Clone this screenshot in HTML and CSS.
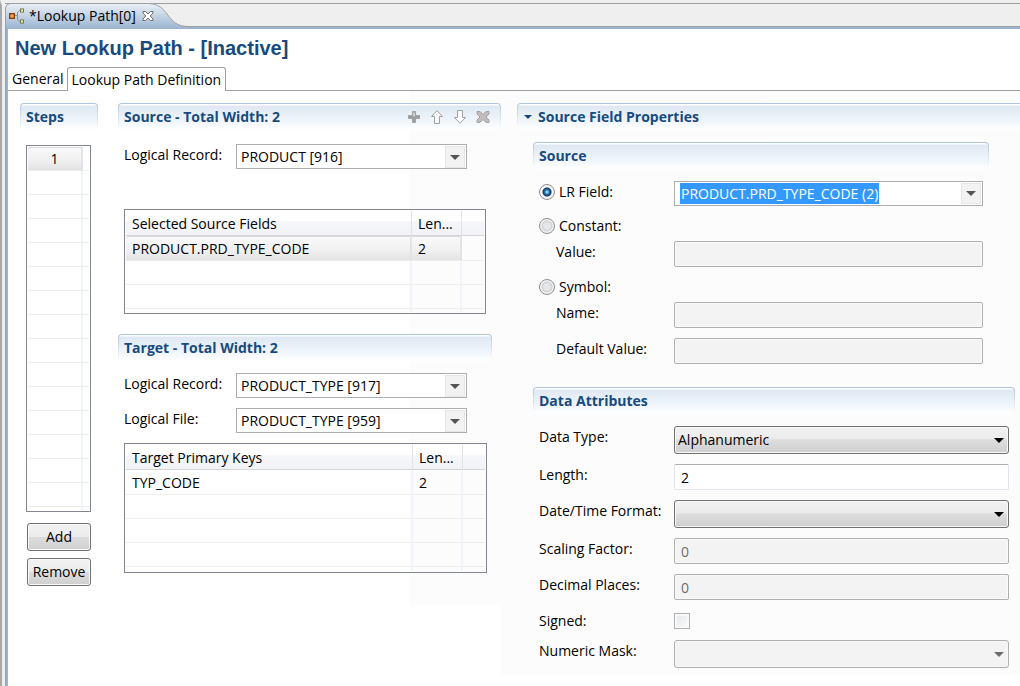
FILE: index.html
```html
<!DOCTYPE html>
<html lang="en">
<head>
<meta charset="utf-8">
<title>Lookup Path</title>
<link rel="stylesheet" href="styles.css">
</head>
<body>
<div class="workbench">
  <div class="sash"></div>
  <div class="editor">
    <header class="tabstrip">
      <div class="editor-tab">
        <svg class="tab-shape" viewBox="0 0 182 26" width="182" height="26" aria-hidden="true">
          <defs><linearGradient id="tabfill" x1="0" y1="0" x2="0" y2="1"><stop offset="0" stop-color="#eaf0f7"/><stop offset="1" stop-color="#99b4d1"/></linearGradient></defs>
          <path d="M0 26V5Q1 1 5 .5H144C158 1 161 11 167 17C172 22 176 23 182 23.500V26Z" fill="url(#tabfill)"/>
          <path d="M.5 26V5Q1 1 5 .5H144C158 1 161 11 167 17C172 22 176 23 182 23.500" fill="none" stroke="#a0a0a0"/>
        </svg>
        <svg class="tab-icon" viewBox="0 0 16 16" width="16" height="16" aria-hidden="true">
          <path d="M6 7.500H8.500M12 2.500H10.500L8.500 4.500V11.500L10.500 13.500H12" fill="none" stroke="#8a8f98"/>
          <rect x=".7" y="5.700" width="4.600" height="4.600" fill="#ffa75a" stroke="#8c3f05" stroke-width="1.400"/>
          <rect x="11.500" y="1" width="3" height="3" fill="#fff9a8" stroke="#77743a"/>
          <rect x="11.500" y="12" width="3" height="3" fill="#fff9a8" stroke="#77743a"/>
        </svg>
        <span class="tab-title">*Lookup Path[0]</span>
        <button class="tab-close" type="button" aria-label="Close">
          <svg viewBox="0 0 12 12" width="12" height="12"><path d="M1 1.500H3.500L6 4 8.500 1.500H11V3L8.200 6 11 9V10.500H8.500L6 8 3.500 10.500H1V9L3.800 6 1 3Z" fill="#fff" stroke="#6b6b6b"/></svg>
        </button>
      </div>
    </header>
    <main class="form">
      <h1>New Lookup Path - [Inactive]</h1>
      <nav class="pages" role="tablist">
        <button type="button" class="page" role="tab">General</button>
        <button type="button" class="page current" role="tab" aria-selected="true">Lookup Path Definition</button>
      </nav>
      <div class="columns">
        <section class="steps">
          <h2 class="bar">Steps</h2>
          <div class="list">
            <table>
              <colgroup><col><col class="edge"></colgroup>
              <tbody>
                <tr class="picked"><td>1</td><td></td></tr>
                <tr><td></td><td></td></tr><tr><td></td><td></td></tr><tr><td></td><td></td></tr>
                <tr><td></td><td></td></tr><tr><td></td><td></td></tr><tr><td></td><td></td></tr>
                <tr><td></td><td></td></tr><tr><td></td><td></td></tr><tr><td></td><td></td></tr>
                <tr><td></td><td></td></tr><tr><td></td><td></td></tr><tr><td></td><td></td></tr>
                <tr><td></td><td></td></tr><tr><td></td><td></td></tr>
                <tr class="rest"><td></td><td></td></tr>
              </tbody>
            </table>
          </div>
          <div class="actions">
            <button type="button" class="push">Add</button>
            <button type="button" class="push">Remove</button>
          </div>
        </section>

        <div class="middle">
          <section class="source">
            <div class="bar">
              <h2>Source - Total Width: 2</h2>
              <div class="tools">
                <button type="button" aria-label="Add"><svg viewBox="0 0 14 14" width="14" height="14"><path d="M5.500 1.500H8.500V5.500H12.500V8.500H8.500V12.500H5.500V8.500H1.500V5.500H5.500Z" fill="#9c9c9c" stroke="#a2a2a2"/><path d="M6.500 2.500H7.500V6.500H6.500Z" fill="#fff"/></svg></button>
                <button type="button" aria-label="Move up"><svg viewBox="0 0 14 14" width="14" height="14"><path d="M7 .7 12.500 6.500H9.500V13.500H4.500V6.500H1.500Z" fill="#fafafa" stroke="#a0a0a0"/></svg></button>
                <button type="button" aria-label="Move down"><svg viewBox="0 0 14 14" width="14" height="14"><path d="M7 13.300 12.500 7.500H9.500V.5H4.500V7.500H1.500Z" fill="#fafafa" stroke="#a0a0a0"/></svg></button>
                <button type="button" aria-label="Delete"><svg viewBox="0 0 14 14" width="14" height="14"><path d="M1 1.500H4L7 4.500 10 1.500H13V4L10 7 13 10V12.500H10L7 9.500 4 12.500H1V10L4 7 1 4Z" fill="#c2bcbc" stroke="#a6a0a0"/></svg></button>
              </div>
            </div>
            <div class="pair">
              <label for="src-record">Logical Record:</label>
              <span class="combo"><select id="src-record"><option>PRODUCT [916]</option></select><i class="drop"></i></span>
            </div>
            <div class="list grid">
              <table>
                <colgroup><col><col class="len"><col class="pad"></colgroup>
                <thead><tr><th>Selected Source Fields</th><th>Len...</th><th></th></tr></thead>
                <tbody>
                  <tr class="picked"><td>PRODUCT.PRD_TYPE_CODE</td><td>2</td><td></td></tr>
                  <tr><td></td><td></td><td></td></tr>
                  <tr><td></td><td></td><td></td></tr>
                  <tr class="rest"><td></td><td></td><td></td></tr>
                </tbody>
              </table>
            </div>
          </section>
          <section class="target">
            <h2 class="bar">Target - Total Width: 2</h2>
            <div class="pair">
              <label for="tgt-record">Logical Record:</label>
              <span class="combo"><select id="tgt-record"><option>PRODUCT_TYPE [917]</option></select><i class="drop"></i></span>
            </div>
            <div class="pair">
              <label for="tgt-file">Logical File:</label>
              <span class="combo"><select id="tgt-file"><option>PRODUCT_TYPE [959]</option></select><i class="drop"></i></span>
            </div>
            <div class="list grid">
              <table>
                <colgroup><col><col class="len"><col class="pad"></colgroup>
                <thead><tr><th>Target Primary Keys</th><th>Len...</th><th></th></tr></thead>
                <tbody>
                  <tr><td>TYP_CODE</td><td>2</td><td></td></tr>
                  <tr><td></td><td></td><td></td></tr>
                  <tr><td></td><td></td><td></td></tr>
                  <tr><td></td><td></td><td></td></tr>
                  <tr class="rest"><td></td><td></td><td></td></tr>
                </tbody>
              </table>
            </div>
          </section>
        </div>

        <section class="properties">
          <h2 class="bar twisty"><svg viewBox="0 0 8 4" width="8" height="4" aria-hidden="true"><path d="M0 0H8L4 4Z" fill="#16477f"/></svg>Source Field Properties</h2>
          <div class="group origin">
            <h3 class="bar">Source</h3>
            <div class="rows">
              <div class="row option">
                <label><input type="radio" name="origin" checked>LR Field:</label>
                <span class="combo"><span class="entry"><input class="selected" type="text" aria-label="LR Field" value="PRODUCT.PRD_TYPE_CODE (2)"></span><button class="drop" type="button" aria-label="Show fields"></button></span>
              </div>
              <div class="row option"><label><input type="radio" name="origin">Constant:</label></div>
              <div class="row sub"><label for="value">Value:</label><input id="value" class="text" type="text" disabled></div>
              <div class="row option"><label><input type="radio" name="origin">Symbol:</label></div>
              <div class="row sub"><label for="name">Name:</label><input id="name" class="text" type="text" disabled></div>
              <div class="row sub"><label for="default">Default Value:</label><input id="default" class="text" type="text" disabled></div>
            </div>
          </div>
          <div class="group attributes">
            <h3 class="bar">Data Attributes</h3>
            <div class="rows">
              <div class="row"><label for="type">Data Type:</label><span class="picker"><select id="type"><option>Alphanumeric</option></select><i class="arrow"></i></span></div>
              <div class="row"><label for="length">Length:</label><input id="length" class="text" type="text" value="2"></div>
              <div class="row"><label for="format">Date/Time Format:</label><span class="picker"><select id="format"><option></option></select><i class="arrow"></i></span></div>
              <div class="row"><label for="scaling">Scaling Factor:</label><input id="scaling" class="text" type="text" value="0" disabled></div>
              <div class="row"><label for="decimals">Decimal Places:</label><input id="decimals" class="text" type="text" value="0" disabled></div>
              <div class="row check"><label for="signed">Signed:</label><input id="signed" type="checkbox" disabled></div>
              <div class="row"><label for="mask">Numeric Mask:</label><span class="picker"><select id="mask" disabled><option></option></select><i class="arrow"></i></span></div>
            </div>
          </div>
        </section>
      </div>
    </main>
  </div>
</div>
</body>
</html>
```

FILE: styles.css
```css
* { box-sizing: border-box; }

body, input, select, button {
  font-family: "Open Sans", "Noto Sans", sans-serif;
  font-size: 14px;
  line-height: 22px;
  color: #000;
}

body { margin: 0; background: #efefef; }
button, input, select { margin: 0; }
h1, h2, h3 { margin: 0; }

.workbench { display: flex; min-height: 100vh; }
.sash { flex: none; width: 5px; border-left: 2px solid #a8a8a8; border-top: 6px solid #efefef; }
.editor { flex: 1; display: flex; flex-direction: column; min-width: 0; }

/* Editor tab */
.tabstrip {
  display: flex;
  height: 29px;
  padding-top: 3px;
  background: linear-gradient(#a0a0a0, #a0a0a0) 0 3px / 100% 1px no-repeat,
    linear-gradient(#a0a0a0, #a0a0a0) 0 26px / 100% 1px no-repeat,
    linear-gradient(#99b4d1, #99b4d1) 0 27px / 100% 2px no-repeat,
    #efefef;
}
.editor-tab { position: relative; display: flex; align-items: center; height: 25px; padding-left: 4px; white-space: nowrap; }
.tab-shape { position: absolute; left: 0; top: 0; }
.tab-icon, .tab-title, .tab-close { position: relative; }
.tab-title { margin: 0 6px 0 4px; }
.tab-close { display: flex; padding: 0; border: 0; background: none; }

/* Form */
.form { flex: 1; border-left: 1px solid #a0a0a0; box-shadow: inset 2px 0 #99b4d1; padding-left: 2px; background: #fff; }
h1 {
  padding: 7px 7px 0;
  font: bold 20px/24px "Liberation Sans", Arial, sans-serif;
  color: #174b80;
}
.pages { display: flex; height: 31px; padding-top: 7px; background: linear-gradient(#a0a0a0, #a0a0a0) 0 100% / 100% 1px no-repeat; }
.page { height: 24px; padding: 0 3px 0 4px; border: 0; background: none; line-height: 24px; white-space: nowrap; }
.page.current { padding: 0 4px; border: 1px solid #a0a0a0; border-bottom: 0; border-radius: 3px 3px 0 0; background: #fff; line-height: 23px; }

.columns { display: grid; grid-template-columns: 78px minmax(340px, 383fr) minmax(400px, 499fr); align-items: start; column-gap: 20px; padding-left: 12px; }
.columns > * { padding-top: 12px; min-width: 0; }

.bar {
  display: flex;
  align-items: center;
  height: 27px;
  padding: 0 5px;
  border: 1px solid transparent;
  border-bottom: 0;
  border-radius: 4px 4px 0 0;
  background: linear-gradient(#fff 1px, #dfe8f3 2px, #eef4fa 60%, #fff) padding-box,
    linear-gradient(#b0c4da, #fff) border-box;
  font-size: 14px;
  font-weight: 700;
  line-height: 22px;
  color: #174b80;
}
.bar h2 { font-size: 14px; line-height: 22px; }
.tools { display: flex; gap: 9px; margin-left: auto; padding-right: 5px; }
.tools button { display: flex; padding: 0; border: 0; background: none; }

/* Lists */
.list { padding: 1px; border: 1px solid #828790; background: #fff; }
.grid { background: none; }
table { width: 100%; table-layout: fixed; border-collapse: separate; border-spacing: 0; }
th, td { height: 24px; padding: 0 6px; border-bottom: 1px solid #ededed; font-weight: 400; line-height: 22px; text-align: left; white-space: nowrap; }
.grid th, .grid td { padding-top: 2px; }
th { height: 25px; border-bottom-color: #d5d5d5; border-right: 1px solid #dfe3e8; background: linear-gradient(#fff 40%, #f4f6f9 45%, #f1f3f6); }
td { border-right: 2px solid #f0f4fb; }
th:last-child, td:last-child { border-right: 0; }
.grid tbody tr:first-child td { height: 25px; }
.rest td, .grid .rest td { height: 3px; padding: 0; border-bottom: 0; }
.target .rest td { height: 4px; }
.picked td { background: linear-gradient(#fafafa, #f0f0f0 60%, #e3e3e3); box-shadow: inset 0 1px #dadada; border-right-color: #e3e3e3; }
.picked td:first-child { border-top-left-radius: 3px; }
.picked td:last-child { background: none; box-shadow: none; }
.len { width: 50px; }
.pad { width: 22px; }

.steps .list { margin: 15px 7px 0 6px; }
.steps td { padding: 0; text-align: center; }
.steps .edge { width: 6px; }
.actions { display: grid; gap: 7px; padding: 11px 7px 0 7px; }
.push {
  height: 28px;
  padding: 0;
  border: 1px solid #707070;
  border-radius: 3px;
  background: linear-gradient(#f2f2f2, #ebebeb 50%, #dddddd 50%, #cfcfcf);
  box-shadow: inset 0 0 0 1px #fafafa;
}

/* Source and target */
.middle { background: linear-gradient(90deg, #fff 76%, #fcfcfc 76%); padding-bottom: 32px; }
.pair { display: grid; grid-template-columns: 112px minmax(0, 231px); align-items: start; margin-left: 6px; }
.pair + .pair { margin-top: 10px; }
.source .pair { margin-top: 14px; }
.source .list { margin: 40px 15px 0 6px; }
.target { padding-top: 20px; }
.target .bar { margin-right: 9px; }
.target .bar + .pair { margin-top: 12px; }
.target .list { margin: 10px 14px 0 6px; }

.combo { display: grid; grid-template-columns: minmax(0, 1fr) 20px; height: 25px; padding: 1px; border: 1px solid #abadb3; background: #fff; }
.combo select { grid-area: 1 / 1 / 2 / 3; appearance: none; border: 0; padding: 0 24px 0 3px; background: none; width: 100%; }
.combo .drop {
  grid-area: 1 / 2;
  display: grid;
  place-items: center;
  padding: 0;
  border: 1px solid #e6e6e6;
  background: #f2f2f2;
  pointer-events: none;
}
.drop::before, .arrow::before { content: ""; border: solid transparent; border-width: 5px 5px 0; border-top-color: #555; }

/* Properties */
.properties { margin-left: -20px; padding-left: 16px; padding-bottom: 7px; background: #fcfcfc; }
.twisty { gap: 6px; padding-left: 6px; border-right: 0; border-top-right-radius: 0; }
.group { margin-left: 16px; }
.origin { margin-top: 12px; margin-right: 31px; }
.attributes { margin-top: 23px; margin-right: 5px; }
.rows { padding: 12px 6px 0; }
.row { display: grid; grid-template-columns: 135px minmax(0, 1fr); align-items: start; }
.row label { white-space: nowrap; }
.sub label { padding-left: 17px; }
.option label { display: flex; align-items: center; gap: 4px; }
.origin .row + .row { margin-top: 10px; }
.origin .option + .sub { margin-top: 4px; }
.origin .sub + .option, .origin .option + .option { margin-top: 9px; }

.attributes .rows { display: grid; gap: 10px; }

.text { width: 100%; height: 26px; padding: 0 6px; border: 1px solid #e2e3ea; border-top-color: #abadb3; border-radius: 2px; background: #fff; }
.text:disabled { border-color: #afafaf; background: #f3f3f3; color: #6d6d6d; box-shadow: inset 0 0 0 1px #fafafa; }

.picker { display: grid; grid-template-columns: minmax(0, 1fr) 20px; }
.picker select {
  grid-area: 1 / 1 / 2 / 3;
  appearance: none;
  height: 28px;
  padding: 0 20px 0 3px;
  border: 1px solid #707070;
  border-radius: 3px;
  background: linear-gradient(#f2f2f2, #ebebeb 45%, #dddddd 50%, #cfcfcf);
  box-shadow: inset 0 0 0 1px #f8f8f8;
}
.picker select:disabled { border-color: #afafaf; background: #f3f3f3; opacity: 1; }
.arrow { grid-area: 1 / 2; display: grid; place-items: center; pointer-events: none; }
.arrow::before { border-top-color: #000; }
select:disabled + .arrow::before { border-top-color: #6d6d6d; }

.entry { display: flex; padding: 0 4px; }
.selected { field-sizing: content; width: auto; min-width: 0; height: 21px; padding: 0 1px; border: 0; background: #3399ff; color: #fff; }

input[type="radio"] {
  appearance: none;
  width: 16px;
  height: 16px;
  border: 1px solid #8e8f8f;
  border-radius: 50%;
  background: radial-gradient(circle, #e6e7e9 3px, #cfd2d5 5px, #f4f4f4 6px);
}
input[type="radio"]:checked { background: radial-gradient(circle, #7fd3f5 0 1px, #2a83c4 2px, #14315f 4px, #f4f4f4 5px); }
input[type="checkbox"] {
  appearance: none;
  width: 16px;
  height: 16px;
  border: 1px solid #b1b1b1;
  background: linear-gradient(135deg, #e3e6ea, #fbfbfb);
  box-shadow: inset 0 0 0 2px #f9f9f9;
}
.check { height: 20px; align-items: center; }
```
